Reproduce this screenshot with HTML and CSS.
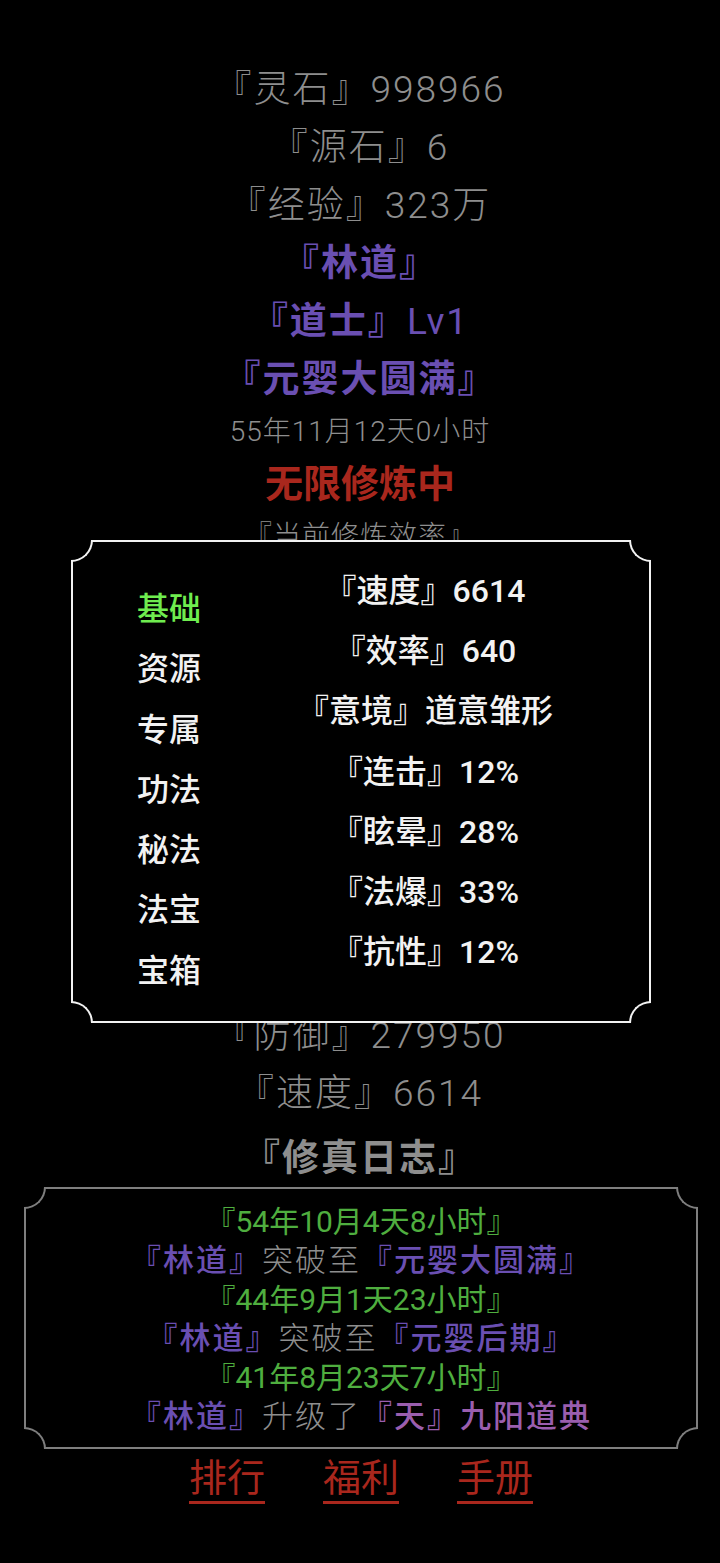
FILE: index.html
```html
<!DOCTYPE html>
<html lang="zh-CN">
<head>
<meta charset="utf-8">
<title>修真</title>
<link rel="stylesheet" href="styles.css">
</head>
<body>
<div class="page">
  <div class="info">
    <div class="line grey">『灵石』998966</div>
    <div class="line grey">『源石』6</div>
    <div class="line grey">『经验』323万</div>
    <div class="line purple">『林道』</div>
    <div class="line purple">『道士』<span class="lv">Lv1</span></div>
    <div class="line purple">『元婴大圆满』</div>
    <div class="date grey">55年11月12天0小时</div>
    <div class="status">无限修炼中</div>
    <div class="rate grey">『当前修炼效率』</div>
    <div class="line grey after-modal">『防御』279950</div>
    <div class="line grey">『速度』6614</div>
  </div>

  <div class="log-title">『修真日志』</div>
  <div class="log-box">
    <span class="corner tl"></span><span class="corner tr"></span>
    <span class="corner bl"></span><span class="corner br"></span>
    <div class="log-line green">『54年10月4天8小时』</div>
    <div class="log-line event"><span class="lp">『林道』</span><span class="lg">突破至</span><span class="lp">『元婴大圆满』</span></div>
    <div class="log-line green">『44年9月1天23小时』</div>
    <div class="log-line event"><span class="lp">『林道』</span><span class="lg">突破至</span><span class="lp">『元婴后期』</span></div>
    <div class="log-line green">『41年8月23天7小时』</div>
    <div class="log-line event"><span class="lp">『林道』</span><span class="lg">升级了</span><span class="lm">『天』九阳道典</span></div>
  </div>

  <nav class="links">
    <a class="link">排行</a>
    <a class="link">福利</a>
    <a class="link">手册</a>
  </nav>

  <div class="modal">
    <span class="corner tl"></span><span class="corner tr"></span>
    <span class="corner bl"></span><span class="corner br"></span>
    <div class="tabs">
      <div class="tab active">基础</div>
      <div class="tab">资源</div>
      <div class="tab">专属</div>
      <div class="tab">功法</div>
      <div class="tab">秘法</div>
      <div class="tab">法宝</div>
      <div class="tab">宝箱</div>
    </div>
    <div class="stats">
      <div class="stat">『速度』6614</div>
      <div class="stat">『效率』640</div>
      <div class="stat">『意境』道意雏形</div>
      <div class="stat">『连击』12%</div>
      <div class="stat">『眩晕』28%</div>
      <div class="stat">『法爆』33%</div>
      <div class="stat">『抗性』12%</div>
    </div>
  </div>
</div>
</body>
</html>
```

FILE: styles.css
```css
* { box-sizing: border-box; }

html, body {
  margin: 0;
  padding: 0;
  background: #000;
}

body {
  font-family: "Roboto", "Noto Sans CJK SC", sans-serif;
  color: #8e8e8e;
  width: 720px;
  min-height: 1563px;
}

.page {
  position: relative;
  padding-top: 61px;
}

.info {
  display: flex;
  flex-direction: column;
  align-items: center;
}

.line {
  font-size: 37px;
  line-height: 58px;
  letter-spacing: 2px;
  white-space: nowrap;
}

.after-modal { margin-top: 446px; }

.grey { color: #8e8e8e; font-weight: 300; }
.purple { color: #6a4fb2; font-weight: 700; }
.lv { font-weight: 400; }

.date {
  font-size: 28px;
  line-height: 46px;
  letter-spacing: 1px;
}

.status {
  font-size: 38px;
  line-height: 58px;
  font-weight: 700;
  color: #a9271d;
}

.rate {
  font-size: 28px;
  line-height: 48px;
  letter-spacing: 1px;
}

.log-title {
  margin-top: 8px;
  text-align: center;
  font-size: 37px;
  line-height: 56px;
  letter-spacing: 2px;
  font-weight: 700;
  color: #8e8e8e;
}

.log-box {
  position: relative;
  margin: 0 22px 0 24px;
  border: 2px solid #7e7e7e;
  padding: 13px 0 11px;
  text-align: center;
}

.log-line {
  font-size: 30px;
  line-height: 39px;
  white-space: nowrap;
}

.log-line.event {
  font-size: 31px;
  letter-spacing: 2px;
}

.green { color: #4fae3f; }
.lp { color: #6a4fb2; font-weight: 500; }
.lg { color: #8e8e8e; font-weight: 300; }
.lm { color: #9a5eae; font-weight: 500; }

.corner {
  position: absolute;
  width: 22px;
  height: 22px;
  background: #000;
  border: 0 solid #7e7e7e;
}
.corner.tl { top: -2px; left: -2px; border-right-width: 2px; border-bottom-width: 2px; border-bottom-right-radius: 22px; }
.corner.tr { top: -2px; right: -2px; border-left-width: 2px; border-bottom-width: 2px; border-bottom-left-radius: 22px; }
.corner.bl { bottom: -2px; left: -2px; border-right-width: 2px; border-top-width: 2px; border-top-right-radius: 22px; }
.corner.br { bottom: -2px; right: -2px; border-left-width: 2px; border-top-width: 2px; border-top-left-radius: 22px; }

.links {
  margin-top: 6px;
  display: flex;
  justify-content: center;
  gap: 58px;
  padding-left: 2px;
}

.link {
  font-size: 38px;
  line-height: 46px;
  color: #a9271d;
  border-bottom: 3px solid #a9271d;
}

.modal {
  position: absolute;
  top: 540px;
  left: 71px;
  width: 580px;
  height: 483px;
  background: #000;
  border: 2px solid #f2f2f2;
  display: flex;
}

.modal .corner { border-color: #f2f2f2; }

.tabs {
  padding: 37px 0 0 64px;
  width: 128px;
  display: flex;
  flex-direction: column;
}

.tab {
  font-size: 32px;
  line-height: 60.3px;
  font-weight: 500;
  color: #f2f2f2;
  white-space: nowrap;
}

.tab.active { color: #6fec4f; }

.stats {
  flex: 1;
  padding-top: 19px;
  display: flex;
  flex-direction: column;
  align-items: center;
}

.stat {
  font-size: 32px;
  line-height: 60.2px;
  font-weight: 500;
  color: #f2f2f2;
  white-space: nowrap;
}
```
